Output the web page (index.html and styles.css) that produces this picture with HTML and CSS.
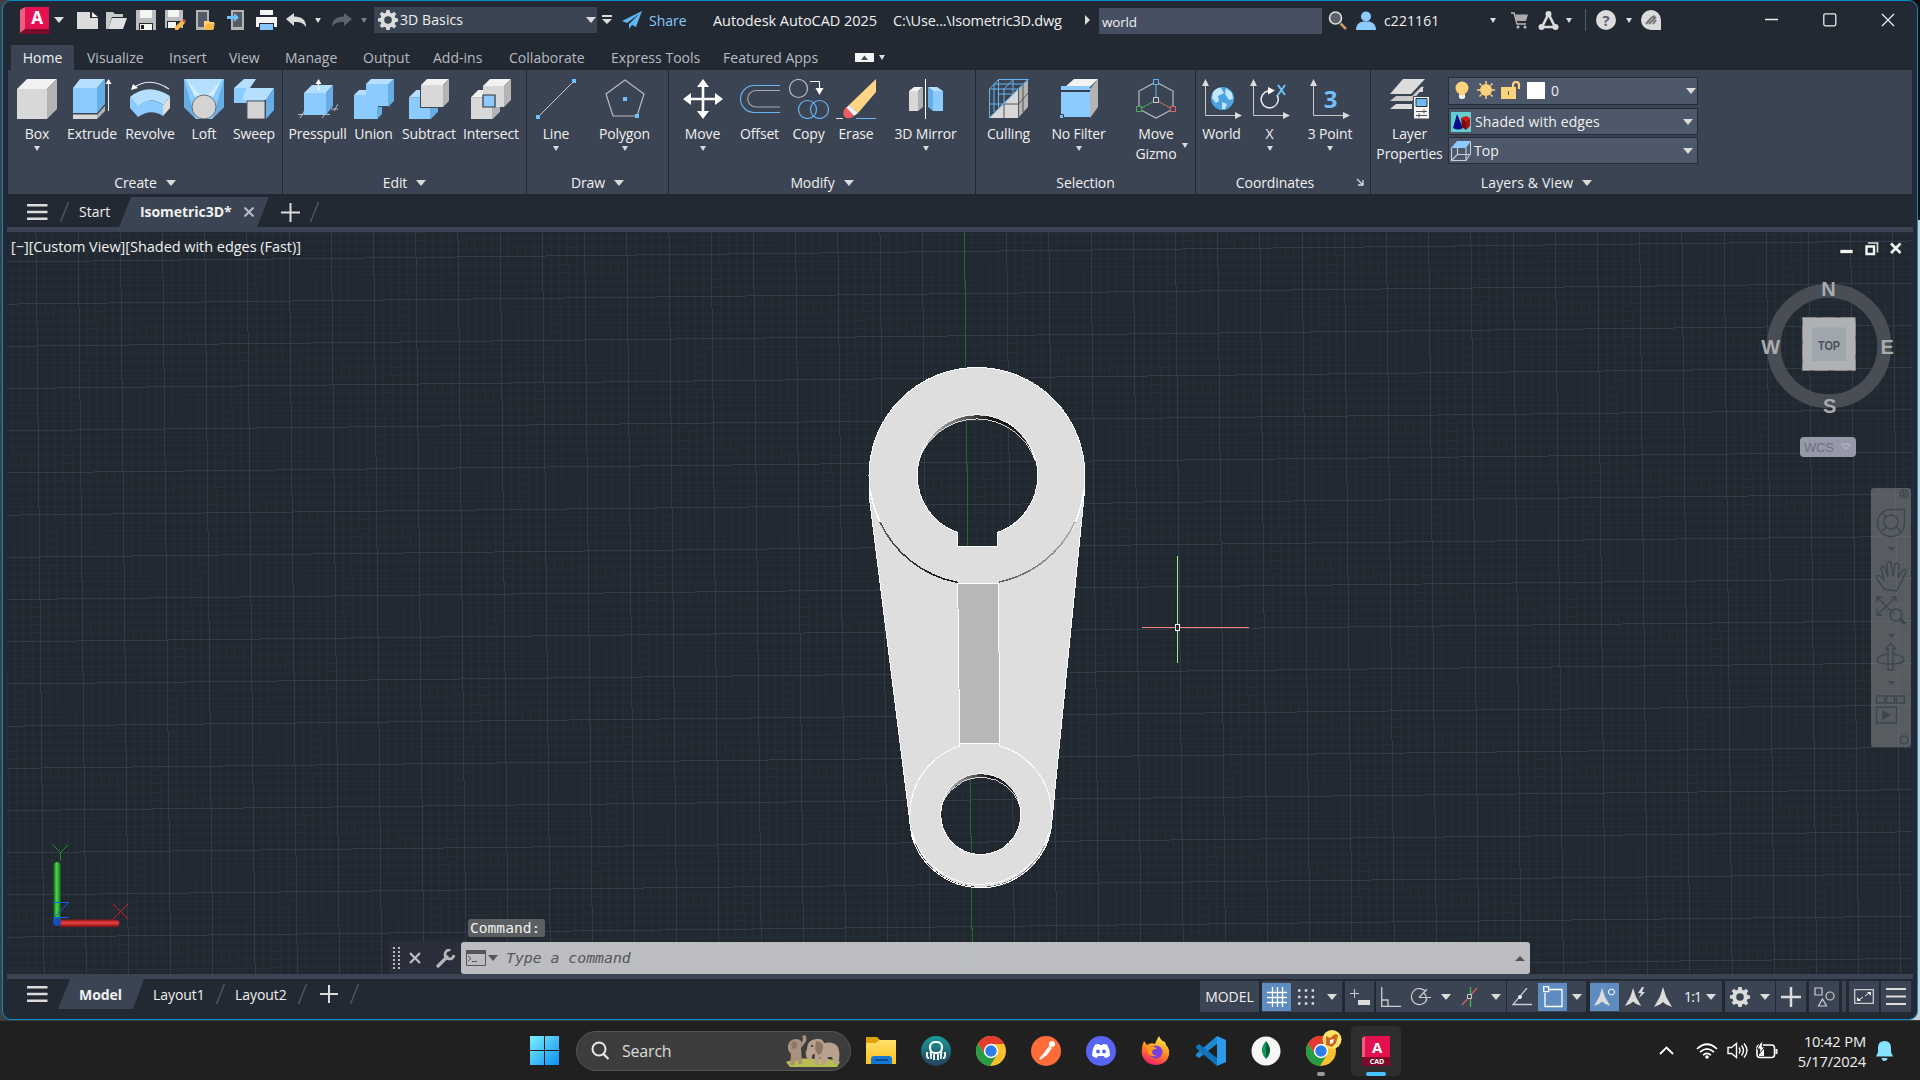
FILE: index.html
```html
<!DOCTYPE html>
<html lang="en">
<head>
<meta charset="utf-8">
<title>Autodesk AutoCAD 2025</title>
<link rel="stylesheet" href="styles.css">
</head>
<body>
<svg class="defs" width="0" height="0">
  <defs>
    <symbol id="gear" viewBox="0 0 20 20"><path fill="#dcdcdc" fill-rule="evenodd" d="M8.3 0h3.4l.4 2.6 1.8.8L16 1.800l2.300 2.300-1.600 2.200.8 1.800 2.500.3v3.400l-2.500.3-.8 1.800 1.600 2.200-2.300 2.300-2.100-1.600-1.800.8-.4 2.400H8.300l-.4-2.400-1.800-.8L4 18.100l-2.300-2.300 1.600-2.200-.8-1.800L0 11.500V8.300L2.500 8l.8-1.800L1.700 4 4 1.800l2.100 1.600 1.800-.8zM10 6.200a3.800 3.800 0 1 0 0 7.600 3.800 3.800 0 0 0 0-7.600z"/></symbol>
    <symbol id="cubeGray" viewBox="0 0 40 40"><path fill="#d8d8d8" d="M0 10h30v30H0z"/><path fill="#f2f2f2" d="M0 10 10 0h30L30 10z"/><path fill="#b4b4b4" d="M30 10 40 0v30L30 40z"/></symbol>
    <symbol id="cubeBlue" viewBox="0 0 40 40"><path fill="#8ccbff" d="M0 10h30v30H0z"/><path fill="#b5dfff" d="M0 10 10 0h30L30 10z"/><path fill="#67aee6" d="M30 10 40 0v30L30 40z"/></symbol>
    <symbol id="axes" viewBox="0 0 40 40"><path stroke="#c8c8c8" fill="none" d="M3.500 4v32.500H36"/><path fill="#dcdcdc" d="M3.500 0 7 7H0zM40 36.500 33 33v7z"/></symbol>
    <symbol id="chrome" viewBox="0 0 30 30"><circle cx="15" cy="15" r="15" fill="#fbc02d"/><path fill="#e33b2e" d="M15 15V8h13.300A15 15 0 0 0 2 7.500L8.900 18.500z"/><path fill="#279b46" d="M15 15 9 18.500 2 7.500A15 15 0 0 0 14 30l7-11.500z"/><circle cx="15" cy="15" r="7.200" fill="#fff"/><circle cx="15" cy="15" r="5.700" fill="#2f7de9"/></symbol>
    <symbol id="person" viewBox="0 0 20 20"><path fill="#dcdcdc" d="M9 0 12 9.500 18 20l-6-2.500L9 15l-3 2.500L0 20l6-10.500z"/></symbol>
    <linearGradient id="win" x1="0" y1="0" x2="1" y2="1"><stop offset="0" stop-color="#7df0ff"/><stop offset="1" stop-color="#0c8ff5"/></linearGradient>
    <linearGradient id="folder" x1="0" y1="0" x2="0" y2="1"><stop offset="0" stop-color="#ffdf6b"/><stop offset="1" stop-color="#fdc31f"/></linearGradient>
    <linearGradient id="fox" x1=".7" y1="0" x2=".3" y2="1"><stop offset="0" stop-color="#fff04a"/><stop offset=".5" stop-color="#ff8a1f"/><stop offset="1" stop-color="#f2186c"/></linearGradient>
    <linearGradient id="kraken" x1="0" y1="0" x2="0" y2="1"><stop offset="0" stop-color="#199a96"/><stop offset="1" stop-color="#24405c"/></linearGradient>
    <linearGradient id="barG" x1="0" y1="0" x2="1" y2="0"><stop offset="0" stop-color="#0d6d0d"/><stop offset=".45" stop-color="#4fd24f"/><stop offset="1" stop-color="#137a13"/></linearGradient>
    <linearGradient id="barR" x1="0" y1="0" x2="0" y2="1"><stop offset="0" stop-color="#8d1212"/><stop offset=".45" stop-color="#ea4444"/><stop offset="1" stop-color="#7c0c0c"/></linearGradient>
    <linearGradient id="bore" x1="0" y1="0" x2="1" y2="0"><stop offset="0" stop-color="#cfcfcf"/><stop offset=".3" stop-color="#777"/><stop offset=".62" stop-color="#151515"/><stop offset="1" stop-color="#222"/></linearGradient>
    <linearGradient id="rim" x1="0" y1="0" x2="1" y2="0"><stop offset="0" stop-color="#555"/><stop offset=".3" stop-color="#111"/><stop offset=".6" stop-color="#555"/><stop offset="1" stop-color="#aaa"/></linearGradient>
  </defs>
</svg>

<div class="desktop">
<div class="window">
  <header class="titlebar">
    <svg width="30" height="27" viewBox="0 0 30 27"><path fill="#ef5f7d" d="M0 3 5 0v22l-5 4z"/><path fill="#e51050" d="M5 0h24v22H5z"/><path fill="#7e0a2c" d="M5 22h24l1 5H0z"/><text x="17" y="17" text-anchor="middle" class="logo-a">A</text></svg>
    <i class="caret"></i>
    <svg width="21" height="17" viewBox="0 0 21 17"><path fill="#dcdcdc" d="M0 0h13v6h8v11H0z"/><path fill="#f4f4f4" d="M15 0l6 5h-6z"/></svg>
    <svg width="21" height="17" viewBox="0 0 21 17"><path fill="#c9c9c9" d="M0 0h7l2 2h8v3H6L2 17H0z"/><path fill="#e0e0e0" d="M6 6h15l-4 11H2z"/></svg>
    <svg width="21" height="20" viewBox="0 0 21 20"><path fill="#bdbdbd" d="M0 0h20v20H0z"/><path fill="#f4f4f4" d="M4 0h12v8H4z"/><path fill="#222933" d="M3 13h14v7H3z"/><path fill="#f4f4f4" d="M4 14h12v6H4z"/><path fill="#222" d="M5 15h3v4H5z"/></svg>
    <svg width="21" height="20" viewBox="0 0 21 20"><path fill="#bdbdbd" d="M0 0h18v18H0z"/><path fill="#f4f4f4" d="M3 0h11v7H3z"/><path fill="#222933" d="M2 11h14v7H2z"/><path fill="#f4f4f4" d="M3 12h8v6H3z"/><path fill="#ffb44c" d="m10 17 7-7 3 3-7 7h-3z"/><path fill="#e5484d" d="m17 10 2-1 2 2-1 2z"/></svg>
    <svg width="20" height="20" viewBox="0 0 20 20"><path fill="#b5b5b5" d="M0 0h13v20H0z"/><path fill="#555a63" d="M2 2h9v15H2z"/><path fill="#ffd27a" d="M8 11h5l1 1h4v7H8z"/><path fill="#f9b64a" d="m10 14 9-1-2 7H8z"/></svg>
    <svg width="20" height="20" viewBox="0 0 20 20"><path fill="#b5b5b5" d="M4 0h13v20H4z"/><path fill="#555a63" d="M6 2h9v15H6z"/><path fill="#6fc0ff" d="M0 6h7V3l5 4.500L7 12V9H0z"/></svg>
    <svg width="21" height="20" viewBox="0 0 21 20"><path fill="#f4f4f4" d="M4 0h13v5H4zM0 7h21v10h-3v-4H3v4H0z"/><path fill="#85c6ff" d="M4 14h13v6H4z"/></svg>
    <svg width="21" height="14" viewBox="0 0 21 14"><path fill="#dcdcdc" d="M8 0v3.500C16 3.500 20 7 20 14 17 9.500 14 8.800 8 9v4L0 6z"/></svg>
    <i class="caret small"></i>
    <svg width="21" height="14" viewBox="0 0 21 14"><path fill="#5d636d" d="M12 0v3.500C4 3.500 0 7 0 14 3 9.500 6 8.800 12 9v4l8-7z"/></svg>
    <i class="caret small dim"></i>
    <div class="workspace"><svg width="20" height="20"><use href="#gear"/></svg><span>3D Basics</span><i class="caret"></i></div>
    <svg width="12" height="10" viewBox="0 0 12 10"><path fill="#dcdcdc" d="M1 0h10v2H1zM1 4h10L6 9z"/></svg>
    <svg width="20" height="18" viewBox="0 0 20 18"><path fill="#5fb4f2" d="M20 0 0 10l5 2L17 3 7 13v5l3-4 4 2z"/></svg>
    <span class="share">Share</span>
    <span class="product">Autodesk AutoCAD 2025</span>
    <span class="path">C:\Use...\Isometric3D.dwg</span>
    <svg width="6" height="10" viewBox="0 0 6 10"><path fill="#dcdcdc" d="M1 0 6 5 1 10z"/></svg>
    <div class="find">world</div>
    <svg width="19" height="19" viewBox="0 0 19 19"><circle cx="7.500" cy="7" r="6" fill="#59616d" stroke="#e0e0e0" stroke-width="1.600"/><path stroke="#c99a62" stroke-width="2.500" d="m12.500 12.500 5.500 5.500"/></svg>
    <svg width="20" height="19" viewBox="0 0 20 19"><circle cx="10" cy="5.500" r="5" fill="#8ccbff"/><path fill="#8ccbff" d="M0 19c0-6 4-8 7-8.500h6c3 .5 7 2.500 7 8.500z"/></svg>
    <span class="account">c221161</span>
    <i class="caret small"></i>
    <svg width="17" height="17" viewBox="0 0 17 17"><path fill="none" stroke="#bbb" stroke-width="1.300" d="M0 1h3l3 11h9"/><path fill="#aaa" d="M4 2.500h13L15 9H5.500z"/><circle cx="7" cy="15" r="1.500" fill="#bbb"/><circle cx="14" cy="15" r="1.500" fill="#bbb"/></svg>
    <svg width="21" height="19" viewBox="0 0 21 19"><path fill="none" stroke="#dcdcdc" stroke-width="2.600" d="M10.500 3 4 16h13z"/><circle cx="10.500" cy="3" r="3" fill="#dcdcdc"/><circle cx="3.500" cy="16" r="3" fill="#dcdcdc"/><circle cx="17.500" cy="16" r="3" fill="#dcdcdc"/></svg>
    <i class="caret small"></i>
    <i class="sep"></i>
    <svg width="20" height="20" viewBox="0 0 20 20"><circle cx="10" cy="10" r="10" fill="#dcdcdc"/><text x="10" y="15.500" text-anchor="middle" class="help-q">?</text></svg>
    <i class="caret small"></i>
    <svg width="20" height="20" viewBox="0 0 20 20"><path fill="#dcdcdc" d="M10 0a10 10 0 0 1 10 10v10H10a10 10 0 0 1 0-20z"/><path stroke="#777" stroke-width="2" fill="none" d="m5 14 5-6 4-2M8 14l4-4 3-3M12 14l3-4"/></svg>
    <svg width="14" height="14" viewBox="0 0 14 14"><path stroke="#eee" stroke-width="1.300" d="M0 6.500h13"/></svg>
    <svg width="14" height="14" viewBox="0 0 14 14"><rect x=".8" y=".8" width="12" height="12" rx="1.500" fill="none" stroke="#eee" stroke-width="1.300"/></svg>
    <svg width="14" height="14" viewBox="0 0 14 14"><path stroke="#eee" stroke-width="1.300" d="m1 1 12 12M13 1 1 13"/></svg>
  </header>

  <nav class="tabs">
    <span class="tab active">Home</span><span>Visualize</span><span>Insert</span><span>View</span><span>Manage</span><span>Output</span><span>Add-ins</span><span>Collaborate</span><span>Express Tools</span><span>Featured Apps</span>
    <svg width="19" height="9" viewBox="0 0 19 9"><path fill="#f4f4f4" d="M0 0h19v9H0z"/><path fill="#4a505a" d="M9.500 2.500 13 7H6z"/></svg>
    <i class="caret small"></i>
  </nav>

  <section class="ribbon">
    <div class="panel create">
      <div class="tools">
        <button class="tool"><svg><use href="#cubeGray"/></svg><span>Box</span><i class="caret small"></i></button>
        <button class="tool"><svg viewBox="0 0 40 40"><path fill="#8ccbff" d="M1 9h24v25H1z"/><path fill="#b5dfff" d="M1 9 8 0h25l-8 9z"/><path fill="#67aee6" d="m25 9 8-9v25l-8 9z"/><path fill="#d8d8d8" d="M1 35.500h24V40H1z"/><path fill="#b4b4b4" d="m25 36 8-9v5l-8 8z"/><path stroke="#eee" d="M36.500 3v29"/><path fill="#fff" d="m36.500 0 3 5h-6z"/></svg><span>Extrude</span></button>
        <button class="tool"><svg viewBox="0 0 40 40"><path fill="none" stroke="#e8e8e8" stroke-width="1.200" d="M3 9Q20-3 39 10"/><path fill="#fff" d="m1 11 2-6 5 4z"/><path fill="#b5dfff" d="M0 18Q18 3 40 17l-7 9Q20 16 8 28z"/><path fill="#8ccbff" d="m0 18 8 9v11L0 29zM8 27q12-10 25-1v11q-12-8-25 1z"/><path fill="#ddd" d="m33 26 7-9v12l-7 8z"/></svg><span>Revolve</span></button>
        <button class="tool"><svg viewBox="0 0 40 40"><path fill="#8ccbff" d="M0 0h40v28L28 40H12L0 28z"/><path fill="#67aee6" d="M0 0v28l11 10zM40 0v28L29 38z"/><path fill="#b5dfff" d="M2 0h36L26 18H14z"/><path fill="#d3eeff" d="m2 0 9 18 5-2zM38 0l-9 18-5-2z"/><circle cx="20" cy="28" r="12" fill="#d4d4d4" stroke="#555" stroke-width=".8"/></svg><span>Loft</span></button>
        <button class="tool"><svg viewBox="0 0 40 40"><path fill="#8ccbff" d="M0 9h12l-2 12h20v14H13V24H0z"/><path fill="#b5dfff" d="M0 9 10 0h12l-6 9h24l-8 12H8l4-12z"/><path fill="#67aee6" d="m32 21 8-12v22l-8 9z"/><path fill="#d4d4d4" stroke="#555" d="M13 22h18v18H13z"/></svg><span>Sweep</span></button>
      </div>
      <div class="caption">Create<i class="caret"></i></div>
    </div>
    <div class="panel edit">
      <div class="tools">
        <button class="tool"><svg viewBox="0 0 40 40"><path stroke="#bbb" d="M0 35.500h32M2 39l5-8M24 39l5-7M33 30h7M36 32l4-7"/><path fill="#8ccbff" d="M6 14h22v22H6z"/><path fill="#b5dfff" d="m6 14 8-8h21l-7 8z"/><path fill="#67aee6" d="m28 14 7-8v21l-7 9z"/><path stroke="#fff" stroke-width="1.400" d="M20.500 3v8"/><path fill="#fff" d="m20.500 0 3 5h-6z"/></svg><span>Presspull</span></button>
        <button class="tool"><svg viewBox="0 0 40 40"><path fill="#8ccbff" d="M0 16h12V5h22v22H24v13H0z"/><path fill="#b5dfff" d="m0 16 5-5h7v5zM12 5l5-5h23l-5 5z"/><path fill="#67aee6" d="m34 5 6-5v22l-6 6h-6v7l-5 5V28h11z"/></svg><span>Union</span></button>
        <button class="tool"><svg viewBox="0 0 40 40"><svg x="0" y="11" width="29" height="29"><use href="#cubeBlue"/></svg><path fill="#3b4453" d="M11 5h23v24H11z"/><path fill="#d8d8d8" d="M12 6h22v22H12z"/><path fill="#f2f2f2" d="m12 6 6-6h22l-6 6z"/><path fill="#b4b4b4" d="m34 6 6-6v22l-6 6z"/></svg><span>Subtract</span></button>
        <button class="tool"><svg viewBox="0 0 40 40"><svg x="0" y="11" width="29" height="29"><use href="#cubeGray"/></svg><svg x="12" y="0" width="28" height="28"><use href="#cubeGray"/></svg><path fill="#8ccbff" stroke="#333" stroke-width="1.200" d="M12 16h12v12H12z"/></svg><span>Intersect</span></button>
      </div>
      <div class="caption">Edit<i class="caret"></i></div>
    </div>
    <div class="panel draw">
      <div class="tools">
        <button class="tool"><svg viewBox="0 0 40 40"><path stroke="#c8c8c8" d="M2 38 38 2"/><path fill="#6fc0ff" d="M0 36h4v4H0zM36 0h4v4h-4z"/></svg><span>Line</span><i class="caret small"></i></button>
        <button class="tool"><svg viewBox="0 0 40 40"><path fill="none" stroke="#bbb" stroke-width="1.200" d="M20 1 39 15l-7 22H8L1 15z"/><path fill="#6fc0ff" d="M18 18h4v4h-4zM30 35h4v4h-4z"/></svg><span>Polygon</span><i class="caret small"></i></button>
      </div>
      <div class="caption">Draw<i class="caret"></i></div>
    </div>
    <div class="panel modify">
      <div class="tools">
        <button class="tool"><svg viewBox="0 0 40 40"><path stroke="#fff" stroke-width="2.600" d="M20 5v30M5 20h30"/><path fill="#fff" d="m20 0 6 8H14zM20 40l6-8H14zM0 20l8-6v12zM40 20l-8-6v12z"/></svg><span>Move</span><i class="caret small"></i></button>
        <button class="tool"><svg viewBox="0 0 40 40"><path fill="none" stroke="#68b4f0" stroke-width="1.200" d="M40 6.500H14a13.500 13.500 0 0 0 0 27h26"/><path fill="none" stroke="#aaa" stroke-width="1.200" d="M40 11.500H16a8 8 0 0 0 0 16.500h24"/></svg><span>Offset</span></button>
        <button class="tool"><svg viewBox="0 0 40 40"><g fill="none" stroke-width="1.200"><circle cx="9.500" cy="9.500" r="9" stroke="#bbb"/><circle cx="18.500" cy="30.500" r="9" stroke="#68b4f0"/><circle cx="30.500" cy="30.500" r="9" stroke="#68b4f0"/></g><path fill="none" stroke="#fff" d="M21 2.500h9.500V10"/><path fill="#fff" d="M26.500 9h8l-4 7z"/></svg><span>Copy</span></button>
        <button class="tool"><svg viewBox="0 0 40 40"><path fill="#ffd685" d="M40 0v13L22 34l-9-8z"/><path fill="#f4f4f4" d="m13 26 9 8-4 3-8-8z"/><path fill="#f05c61" d="m10 28 8 9q-3 3-8 2-4-3-2-8z"/><path stroke="#ddd" d="M0 39.500h7"/><path stroke="#68b4f0" d="M20 39.500h20"/></svg><span>Erase</span></button>
        <button class="tool"><svg viewBox="0 0 40 40"><path fill="#d8d8d8" d="M3 12h9v20H3z"/><path fill="#f2f2f2" d="m3 12 5-4h9l-5 4z"/><path fill="#b0b0b0" d="m12 12 5-4v20l-5 4z"/><path fill="#67aee6" d="m22 8 5 4v20l-5-4z"/><path fill="#b5dfff" d="M22 8h9l6 4H27z"/><path fill="#8ccbff" d="M27 12h10v20H27z"/><path stroke="#fff" d="M19.500 0v40"/></svg><span>3D Mirror</span><i class="caret small"></i></button>
      </div>
      <div class="caption">Modify<i class="caret"></i></div>
    </div>
    <div class="panel selection">
      <div class="tools">
        <button class="tool"><svg viewBox="0 0 40 40"><path fill="#d8d8d8" d="M0 39 29 10v29z"/><path fill="#b4b4b4" d="M29 10 39 0v28L29 39z"/><path fill="none" stroke="#68b4f0" d="M.5 39V10h29M.5 10l9-9.500h30L29.500 10 .5 39M.5 25h15M15 10v14M15 10l9-9.500M5 5h30M9.500.5v28M24 .5V14M5 5v28M10 15h14"/><path fill="none" stroke="#555" d="M15 25h14.500L39 14M15 25v14M29.500 10v29M34 5v28"/></svg><span>Culling</span></button>
        <button class="tool"><svg viewBox="0 0 40 40"><path fill="#b4b4b4" d="m31 10 8-10v28l-8 11z"/><path fill="#f2f2f2" d="m6 8 9-8h24l-8 8z"/><path fill="#8ccbff" d="M2 7h29v4H2zM2 13h29v25H2z"/><path fill="#333b48" d="M2 11h29v1.500H2z"/><path fill="#6fc0ff" stroke="#3b4453" d="M.5 35.500h4v4h-4z"/></svg><span>No Filter</span><i class="caret small"></i></button>
        <button class="tool"><svg viewBox="0 0 40 40"><path fill="none" stroke="#bbb" stroke-width="1.200" d="M20 3l17 9v18l-17 9L3 30V12z"/><path stroke="#68b4f0" d="M20 3v17"/><path stroke="#4fae5f" d="M20 21 4 30"/><path stroke="#e26868" d="m20 21 16 9"/><g fill="#3b4453"><path stroke="#68b4f0" d="M17.500.5h5v5h-5z"/><path stroke="#ccc" d="M17.500 18.500h5v5h-5z"/><path stroke="#4fae5f" d="M.5 27.500h5v5h-5z"/><path stroke="#e26868" d="M34.500 27.500h5v5h-5z"/></g></svg><span>Move<br>Gizmo</span><i class="caret small side"></i></button>
      </div>
      <div class="caption">Selection</div>
    </div>
    <div class="panel coordinates">
      <div class="tools">
        <button class="tool"><svg viewBox="0 0 40 40"><use href="#axes"/><circle cx="20.500" cy="19.500" r="11.500" fill="#4da3e0"/><path fill="#c2e6ff" d="M11 13q5-5 8-4l3 5-6 3 1 5-3 2-4-5zM24 9l6 5 1 6-4 1-4-6zM20 23l5 2-2 5h-3z"/></svg><span>World</span></button>
        <button class="tool"><svg viewBox="0 0 40 40"><use href="#axes"/><path fill="none" stroke="#eee" stroke-width="1.500" d="M18 12a8.500 8.500 0 1 0 9 4"/><path fill="#fff" d="m18 8 7 3.500-7 4z"/><path stroke="#6fc0ff" stroke-width="2" d="m28 6 7 10M35 6l-7 10"/></svg><span>X</span><i class="caret small"></i></button>
        <button class="tool"><svg viewBox="0 0 40 40"><use href="#axes"/><text x="20.500" y="29" text-anchor="middle" class="three">3</text></svg><span>3 Point</span><i class="caret small"></i></button>
      </div>
      <div class="caption">Coordinates<svg class="launcher" width="8" height="8" viewBox="0 0 8 8"><path fill="none" stroke="#ddd" stroke-width="1.300" d="m1 1 5 5M7 2v5H2"/></svg></div>
    </div>
    <div class="panel layers">
      <div class="tools">
        <button class="tool"><svg viewBox="0 0 40 40"><path fill="#dcdcdc" d="M13 0h22L21 15H0z"/><path fill="#c9c9c9" d="M6 17h16l9-9h3L22 22H0z"/><path fill="#dcdcdc" d="M6 25h16v5H0zM27 13l6-6v6z"/><path fill="#f4f4f4" stroke="#3b4453" d="M23.500 17.500h16V40h-16z"/><path fill="#6fbaf5" stroke="#333" d="M26 19.500h11v8H26z"/><path stroke="#555" d="M26 32.500h11M26 36.500h11M34 30.500v4M29 34.500v4"/></svg><span>Layer<br>Properties</span></button>
        <div class="combos">
          <div class="combo tall"><svg width="94" height="20" viewBox="0 0 94 20"><circle cx="7" cy="7" r="6.500" fill="#ffd37c"/><path fill="#ffd37c" d="M4 11h6v3H4z"/><path fill="#f4f4f4" d="M4 14h6v3l-2 1H6l-2-1z"/><circle cx="31" cy="9" r="6" fill="#ffd37c"/><path stroke="#ffd37c" stroke-width="1.500" d="M31 0v3M31 15v3M22 9h3M37 9h3M24.500 2.500l2 2M35.500 13.500l2 2M37.500 2.500l-2 2M26.500 13.500l-2 2"/><path fill="#ffd37c" d="M46 6h15v12H46z"/><path fill="none" stroke="#ffd37c" stroke-width="2.200" d="M58 7V4q0-3 3-3t3 3v4"/><path stroke="#555" d="M53.500 10v4"/><path fill="#fff" d="M72 1h18v17H72z"/></svg><span>0</span><i class="caret"></i></div>
          <div class="combo"><svg width="20" height="20" viewBox="0 0 20 20"><path fill="#63cfcf" d="M0 0h20v20H0z"/><path fill="#0b0b8c" d="m6 2 6 14q-5 3-10 0z"/><path fill="#e01010" d="m10 6 5-2 4 2-4 3z"/><path fill="#7a0c0c" d="m10 6 5 3v9l-4-3z"/><path fill="#a81010" d="m15 9 4-3v8l-4 4z"/></svg><span>Shaded with edges</span><i class="caret"></i></div>
          <div class="combo view"><svg width="20" height="20" viewBox="0 0 20 20"><path fill="#8ccbff" d="m0 7 6-7h14l-5 7z"/><path fill="none" stroke="#c9d2dc" stroke-width="1.100" d="M.5 7v12.500H15V7M15 19.500l4.500-7V1M6.500 7v6.500L.5 19.500M6.500 13.500h13"/></svg><span>Top</span><i class="caret"></i></div>
        </div>
      </div>
      <div class="caption">Layers &amp; View<i class="caret"></i></div>
    </div>
  </section>

  <nav class="docs">
    <svg width="21" height="16" viewBox="0 0 21 16"><path fill="#dcdcdc" d="M0 0h20.500v2.500H0zM0 6.700h20.500v2.500H0zM0 13.500h20.500V16H0z"/></svg>
    <svg width="9" height="20"><path stroke="#525a68" stroke-width="1.300" d="M8.500 0 .5 20"/></svg>
    <span>Start</span>
    <div class="doc-tab"><b>Isometric3D*</b><svg width="10" height="10" viewBox="0 0 10 10"><path stroke="#b9bdc4" stroke-width="2" d="m.5.5 9 9M9.500.5l-9 9"/></svg></div>
    <svg width="19" height="19"><path stroke="#dcdcdc" stroke-width="2" d="M9.500 0v19M0 9.500h19"/></svg>
    <svg width="9" height="20"><path stroke="#525a68" stroke-width="1.300" d="M8.500 0 .5 20"/></svg>
  </nav>

  <main class="viewport">
    <svg class="scene" width="1906" height="742" viewBox="7 232 1906 742">
      <g shape-rendering="crispEdges" fill="none">
        <path id="minor" stroke="#262e3a"/>
        <path id="major" stroke="#323a4b"/>
        <path stroke="#1e6b24" d="M964.500 232 972.500 974"/>
      </g>
      <g shape-rendering="crispEdges">
        <path fill="#dedede" stroke="#fff" fill-rule="evenodd" d="M869 475.500A108 108 0 0 1 1085 475.500C1085 487 1084 497 1083 507L1052 820A71.300 71.300 0 0 1 909.600 820L870.500 507C869 497 869 487 869 475.500ZM957.700 532.500V546.300H997.300V532.500A60.300 60.300 0 1 0 957.700 532.500ZM940.700 814.500a40 40 0 1 0 80 0a40 40 0 1 0-80 0z"/>
        <path fill="none" stroke="#fff" stroke-width="1.500" d="M870 490Q874 512 884 529M1084 490Q1081 512 1072 529"/>
        <path fill="none" stroke="url(#rim)" stroke-width="1.500" d="M880 522A108 108 0 0 0 957.700 582.500M999 582A108 108 0 0 0 1075 522"/>
        <path fill="url(#bore)" stroke="#fff" stroke-width=".8" d="M919 460A59.800 59.800 0 0 1 1035 460A61.500 61.500 0 0 0 919 460Z"/>
        <path fill="url(#bore)" stroke="#fff" stroke-width=".8" d="M941.500 806A40 40 0 0 1 1020 806A41.300 41.300 0 0 0 941.500 806Z"/>
        <path fill="none" stroke="#fff" d="M960 746A71 71 0 0 0 910 815M1000 746A71 71 0 0 1 1051.500 815M912 832A71 71 0 0 0 1049 832"/>
        <path fill="none" stroke="url(#rim)" stroke-width="1.500" d="M915 844A70.500 70.500 0 0 0 1045 845"/>
        <path fill="none" stroke="#fff" d="M911 833A71.500 71.500 0 0 0 1050 833"/>
        <path fill="#b7b7b7" stroke="#fff" d="M957.700 583.500H998.500L999.700 743.500H959.700Z"/>
        <path stroke="#fff" d="M959.700 743v3M999.700 743v3"/>
        <path stroke="#f98080" d="M1142 627.500h33M1180 627.500h69"/>
        <path stroke="#8cf884" d="M1177.500 556v68M1177.500 631v32"/>
        <path fill="none" stroke="#fff" d="M1175.500 624.500h4v6h-4z"/>
      </g>
      <g>
        <path fill="url(#barG)" d="M53.500 864q3.500-4 7 0v56h-7z"/>
        <path fill="url(#barR)" d="M60 919.500h58q2 3.500 0 7.500H60z"/>
        <circle cx="57" cy="922" r="4" fill="#1450b8"/>
        <path fill="none" stroke="#12a012" d="m53 845 7.500 7.500L68 845M60.500 852v8"/>
        <path fill="none" stroke="#d42020" d="m113 904 15 15M128 904l-15 15"/>
        <path fill="none" stroke="#1060ff" d="M53.500 902.500H68.500L54 917.500H68"/>
      </g>
      <g>
        <circle cx="1829" cy="346" r="55.300" fill="none" stroke="#484d56" stroke-width="14"/>
        <path fill="#b0b1b3" stroke="#85888c" stroke-dasharray="14 5" d="M1802.500 317.500h53v53h-53z"/>
        <path fill="#9fa7ad" d="M1812 327.500h34V361h-34z"/>
        <text x="1829" y="349.500" textLength="22" lengthAdjust="spacingAndGlyphs" class="cube">TOP</text>
        <g class="compass"><text x="1828.300" y="295.500">N</text><text x="1770.700" y="354">W</text><text x="1887" y="353.500">E</text><text x="1829.500" y="412.500">S</text></g>
        <rect x="1800" y="437" width="56" height="20" rx="4" fill="#9699a7"/>
        <text x="1804" y="451.500" textLength="30" class="wcs">WCS</text>
        <path fill="none" stroke="#b9bdc8" d="M1841.500 444h9l-4.500 5z"/>
        <path fill="#f4f4f4" stroke="#111" stroke-width=".6" d="M1840 249.500h13v4h-13z"/>
        <path fill="none" stroke="#ddd" stroke-width="1.600" d="M1868 243h9.500v9.500"/>
        <path fill="none" stroke="#f4f4f4" stroke-width="2.400" d="M1866.500 246.500h7.500v7.500h-7.500z"/>
        <path stroke="#f4f4f4" stroke-width="2.600" d="m1891 243.500 9.500 9.500M1900.500 243.500 1891 253"/>
      </g>
      <g fill="none" stroke="#3f4550" stroke-width="1.400">
        <rect x="1871" y="488" width="40" height="259" rx="3" fill="#7b7f81" fill-opacity=".6" stroke="none"/>
        <circle cx="1904" cy="494" r="4"/><path d="m1902 492 4 4M1906 492l-4 4"/>
        <path d="M1904.500 509.500V523A13.500 13.500 0 1 1 1891 509.500z"/><circle cx="1891" cy="522" r="7"/><path d="m1882 513 4 4M1896 527l4 4M1886 527l-4 4"/>
        <path d="M1884 589l-7-10q-2-5 3-3l4 4-3-12q2-4 4 0l3 9-1-14q3-3 4 0l2 13 2-12q3-2 4 1l-1 13 5-8q4-1 3 2l-5 11-5 8z"/>
        <path d="m1878 598 16 16M1896 597l-18 17M1877 602v-5h5M1891 597h5v5M1877 609v6h5"/><circle cx="1896" cy="615" r="6"/><path stroke-width="3" d="m1900 619 5 5"/>
        <path d="M1890.500 643l5 6h-2.500v21h-5v-21h-2.500zM1887 654q-10 2-10 6t13 4 14-4-11-6"/>
        <path d="M1876.500 696h8v7h-8zM1886.500 696h8v7h-8zM1896.500 696h8v7h-8zM1876.500 707h20v16h-20z"/>
        <circle cx="1904" cy="740" r="4"/>
        <g fill="#3f4550" stroke="none"><path d="M1888 547h7l-3.500 3.500zM1888 634h7l-3.500 3.500zM1888 681h7l-3.500 3.500zM1882 710l9 5-9 5z"/></g>
      </g>
    </svg>
    <div class="view-label">[−][Custom View][Shaded with edges (Fast)]</div>
    <div class="history">Command:</div>
    <div class="command">
      <div class="handle">
        <svg width="7" height="22"><path stroke="#bbb" stroke-width="2" stroke-dasharray="2 2" d="M1 0v22M6 0v22"/></svg>
        <svg width="12" height="12"><path stroke="#bfc1c5" stroke-width="2.200" d="m1 1 10 10M11 1 1 11"/></svg>
        <svg width="19" height="19" viewBox="0 0 19 19"><path stroke="#b5b7bb" stroke-width="3.200" stroke-linecap="round" d="m2 17 9-9"/><path fill="none" stroke="#b5b7bb" stroke-width="2.800" d="M14.500 1A4.500 4.500 0 1 0 18 6"/></svg>
      </div>
      <div class="entry">
        <svg width="20" height="16" viewBox="0 0 20 16"><path fill="none" stroke="#555" d="M.5.5h19v15H.5z"/><path fill="#555" d="M0 0h20v4H0z"/><path fill="none" stroke="#555" d="m2 6 3 2.500L2 11M6 11.500h5"/></svg>
        <i class="caret dark"></i><span>Type a command</span><i class="caret dark up"></i>
      </div>
    </div>
  </main>

  <footer class="bottom">
    <div class="layouts">
      <svg width="21" height="16" viewBox="0 0 21 16"><path fill="#dcdcdc" d="M0 0h20.500v2.500H0zM0 6.700h20.500v2.500H0zM0 13.500h20.500V16H0z"/></svg>
      <div class="layout-tab"><b>Model</b></div>
      <span>Layout1</span>
      <svg width="9" height="20"><path stroke="#525a68" stroke-width="1.300" d="M8.500 0 .5 20"/></svg>
      <span>Layout2</span>
      <svg width="9" height="20"><path stroke="#525a68" stroke-width="1.300" d="M8.500 0 .5 20"/></svg>
      <svg width="18" height="18"><path stroke="#dcdcdc" stroke-width="2" d="M9 0v18M0 9h18"/></svg>
      <svg width="9" height="20"><path stroke="#525a68" stroke-width="1.300" d="M8.500 0 .5 20"/></svg>
    </div>
    <div class="status">
      <div class="cell c-model">MODEL</div>
      <div class="cell c-grid"><span class="on"><svg width="20" height="20"><path stroke="#fff" stroke-width="1.300" d="M5.500 0v20M10.500 0v20M15.500 0v20M0 5.500h20M0 10.500h20M0 15.500h20"/></svg></span><svg width="17" height="16"><path stroke="#dcdcdc" stroke-width="2.500" stroke-dasharray="2.500 4.300" d="M0 1.500h17M0 8h17M0 14.500h17"/></svg><i class="caret"></i></div>
      <div class="cell c-dyn"><svg width="20" height="18" viewBox="0 0 20 18"><path stroke="#ccc" d="M0 5.500h9M4.500 1v9"/><path fill="#dcdcdc" d="M8 12h12v5H8z"/></svg></div>
      <div class="cell c-ortho"><svg width="20" height="20"><path fill="none" stroke="#ccc" stroke-width="1.300" d="M.7 0v19.300H20M.7 13H7v6"/></svg><svg width="22" height="18"><path fill="none" stroke="#ccc" stroke-width="1.200" d="M16 4a8 8 0 1 0 1 7M9 9.500h12M9 9.500 17 1M14 5q3 3 2 7"/></svg><i class="caret"></i><svg width="17" height="20"><path stroke="#d65c5c" stroke-width="1.300" d="M16 1 1 18"/><path stroke="#49ad5c" stroke-width="1.300" d="M9.500 0v20"/><path fill="#3b4453" stroke="#ccc" d="M6.500 7.500h4v4h-4z"/></svg><i class="caret"></i></div>
      <div class="cell c-track"><svg width="20" height="18"><path fill="none" stroke="#ccc" stroke-width="1.300" d="M15 0 1 16.500h19"/><circle cx="8" cy="9" r="2" fill="#eee"/></svg><span class="on"><svg width="20" height="22"><path fill="none" stroke="#fff" stroke-width="1.300" d="M6 3.500h13v17H2V7M.7.7h5v5h-5z"/></svg></span><i class="caret"></i></div>
      <div class="cell c-anno"><span class="on"><svg width="22" height="20" viewBox="0 0 22 20"><svg width="18" height="20"><use href="#person"/></svg><circle cx="17.500" cy="5" r="3" fill="none" stroke="#fff"/></svg></span><svg width="20" height="20" viewBox="0 0 20 20"><svg width="18" height="20"><use href="#person"/></svg><path fill="#dcdcdc" d="m17 0-4 6h3l-2 5 6-6h-3l2-5z"/></svg><svg width="20" height="20"><use href="#person"/></svg><em>1:1</em><i class="caret"></i></div>
      <div class="cell c-gear"><svg width="20" height="20"><use href="#gear"/></svg><i class="caret"></i></div>
      <div class="cell c-plus"><svg width="20" height="20"><path stroke="#dcdcdc" stroke-width="2.500" d="M10 0v20M0 10h20"/></svg></div>
      <div class="cell c-iso"><svg width="21" height="20"><path fill="none" stroke="#ccc" stroke-width="1.200" d="M1 1h7v7H1zM4.500 19h8L8.500 12z"/><circle cx="16" cy="9" r="4" fill="none" stroke="#ccc" stroke-width="1.200"/></svg></div>
      <div class="cell c-bar"></div>
      <div class="cell c-full"><svg width="20" height="15"><path fill="none" stroke="#ccc" stroke-width="1.300" d="M.7.7h18.600v13.600H.7z"/><path fill="#eee" d="M13 3h4v4zM3 8v4h4z"/><path stroke="#eee" d="m11 7 4-3M5 11l4-3"/></svg></div>
      <div class="cell c-menu"><svg width="20" height="18"><path fill="#dcdcdc" d="M0 0h20v2H0zM0 7.500h20v2H0zM0 15h20v2H0z"/></svg></div>
    </div>
  </footer>
</div>
</div>

<div class="taskbar">
  <svg width="29" height="29" viewBox="0 0 29 29"><path fill="url(#win)" d="M0 0h14v14H0zM15 0h14v14H15zM0 15h14v14H0zM15 15h14v14H15z"/></svg>
  <div class="search"><svg width="18" height="19"><circle cx="8" cy="8" r="6.500" fill="none" stroke="#e8e8e8" stroke-width="2"/><path stroke="#e8e8e8" stroke-width="2.200" d="m12.500 13 5 5"/></svg><span>Search</span>
    <svg width="56" height="32" viewBox="0 0 56 32"><path fill="#b9bf4e" d="M1 27q12-5 27-3 15-2 27 3l-3 5H5z"/><path fill="#a8917d" d="M3 10q2-6 8-6 5 0 6 4l1-5-1-2 3-1q3 4 0 8l-4 5 1 16h-4l-1-6-3 7H5L6 19q-4-4-3-9z"/><path fill="#b8a28f" d="M22 14q0-9 9-10 6-1 8 4 10-2 14 4 3 8 0 17h-4l-2-7h-4l-2 8h-4l-2-9-2 9h-4l1-11q-4 0-3 5l-4 1q-4-6-1-11z"/><path fill="#8c7666" d="M31 6q8 0 7 7-1 6-5 7l-3-6zM8 6q5 1 4 5-1 3-4 3l-2-4z"/><circle cx="27" cy="11" r="1" fill="#222"/></svg>
  </div>
  <svg width="30" height="28" viewBox="0 0 30 28"><path fill="#e0a20c" d="M0 0h11l3 3v5H0z"/><path fill="url(#folder)" d="M0 6h10l3-3h17v24H0z"/><path fill="#1478d4" d="M5 27v-5q0-3 3-3h15q3 0 3 3v5z"/><path stroke="#0a3f80" stroke-width="1.500" d="M9 23h13"/></svg>
  <svg width="30" height="30" viewBox="0 0 30 30"><circle cx="15" cy="15" r="15" fill="url(#kraken)"/><path fill="none" stroke="#fff" stroke-width="1.800" d="M13 24v-6M17 24v-6M10 23v-4q0-2-1-3M20 23v-4q0-2 1-3M6 16v4q0 2 2 2M24 16v4q0 2-2 2"/><rect x="9" y="6" width="12" height="11" rx="5" fill="none" stroke="#fff" stroke-width="2.200"/></svg>
  <svg width="30" height="30"><use href="#chrome"/></svg>
  <svg width="30" height="30" viewBox="0 0 30 30"><circle cx="15" cy="15" r="15" fill="#ff6c37"/><circle cx="21" cy="8" r="3" fill="#fff"/><path fill="#fff" d="m18 10 3 2-5 7-7 5-1-1 5-6z"/></svg>
  <svg width="30" height="30" viewBox="0 0 30 30"><circle cx="15" cy="15" r="15" fill="#5865f2"/><path fill="#fff" d="M9 8.500 13 8l.6 1h2.800l.6-1 4 .5q3 5 3 11-2 2-5 2.500l-1-2h-6l-1 2q-3-.5-5-2.500 0-6 3-11z"/><circle cx="12" cy="15.500" r="1.900" fill="#5865f2"/><circle cx="18" cy="15.500" r="1.900" fill="#5865f2"/></svg>
  <svg width="30" height="30" viewBox="0 0 30 30"><path fill="url(#fox)" d="M3 5l3 4q4-3 8-1 1-3 4-8 2 5 6 6l1 3q4 4 3 10-2 9-12 10Q4 29 1 19q-1-7 2-14z"/><circle cx="15" cy="16" r="6.500" fill="#7a3fe0"/><path fill="#ff9a20" d="M6 11q6-3 10 2-5 0-5 3t5 4q-6 1-9-3z"/></svg>
  <svg width="30" height="30" viewBox="0 0 30 30"><path fill="#2b9bea" d="M21 0 30 4v22l-9 4z"/><path fill="#1f8ad2" d="M21 0v8L3 22l-3-2v-2z"/><path fill="#1272b8" d="M21 30v-8L3 8 0 10v2z"/></svg>
  <svg width="30" height="30" viewBox="0 0 30 30"><circle cx="15" cy="15" r="14.500" fill="#f6f6f4"/><path fill="#0f9a5c" d="M15 5q-5 6-4 11 1 4 4 7z"/><path fill="#0a5a3c" d="M15 5q5 6 4 11-1 4-4 7z"/></svg>
  <div class="app running"><svg width="36" height="36" viewBox="0 0 36 36"><svg y="6" width="30" height="30"><use href="#chrome"/></svg><circle cx="26" cy="9.500" r="9.500" fill="#fbe36a"/><path fill="#d2641e" d="m20 6 4 2 5-4 3 1-2 8-4 4-6-2z"/><path fill="#fff" d="m24 10 4-1-1 4-3 1z"/></svg></div>
  <div class="app focused"><svg width="29" height="30" viewBox="0 0 29 30"><path fill="#ef5f7d" d="M0 2 3 0v21l-3 2z"/><path fill="#e51050" d="M3 0h25v21H3z"/><path fill="#7e0a2c" d="M0 21h28l1 9H0z"/><text x="15" y="17" text-anchor="middle" class="logo-a small">A</text><text x="15" y="28" text-anchor="middle" class="cad">CAD</text></svg></div>
  <div class="tray">
    <svg width="15" height="9"><path fill="none" stroke="#fff" stroke-width="1.800" d="m1 8 6.500-6.500L14 8"/></svg>
    <svg width="22" height="16" viewBox="0 0 22 16"><path fill="none" stroke="#fff" stroke-width="1.700" d="M1 6q10-9.500 20 0M4 9.200q7-6.500 14 0M7 12.200q4-3.800 8 0"/><circle cx="11" cy="14" r="1.800" fill="#fff"/></svg>
    <svg width="21" height="17" viewBox="0 0 21 17"><path fill="none" stroke="#fff" stroke-width="1.400" d="M1 5.500h3.500l5-4v14l-5-4H1zM12 5.500q2 3 0 6M14.500 3.500q4 5 0 10M17 1.500q6 7 0 14"/></svg>
    <svg width="22" height="17" viewBox="0 0 22 17"><rect x="1" y="3" width="17.500" height="12.500" rx="3" fill="none" stroke="#fff" stroke-width="1.600"/><path stroke="#fff" stroke-width="2" d="M20.500 7v5"/><path fill="#fff" d="M3 9 8 7v7H3z"/><path fill="#fff" stroke="#202020" d="M5 0 1 7h3l-1 5 6-7H6l1-5z"/></svg>
    <div class="clock">10:42 PM<br>5/17/2024</div>
    <svg width="17" height="20" viewBox="0 0 17 20"><path fill="#86e2ff" d="M8.500 0q6.500 0 6.500 7v4l2 4.500H0L2 11V7q0-7 6.500-7zM5.500 17h6q-.5 3-3 3t-3-3z"/></svg>
  </div>
</div>
<script src="grid.js"></script>
</body>
</html>
```
FILE: grid.js
```js
// Builds the drafting grid: a square lattice turned slightly about the drawing origin.
const step = 42.2, angle = 0.011, ox = 966, oy = 378;
const cos = Math.cos(angle), sin = Math.sin(angle);
const toScreen = (u, v) => (ox + u * cos + v * sin).toFixed(1) + ' ' + (oy - u * sin + v * cos).toFixed(1);
let major = '', minor = '';
for (let i = -125; i <= 125; i++) {
  const t = i * step / 5;
  const d = 'M' + toScreen(t, -200) + 'L' + toScreen(t, 640) + 'M' + toScreen(-1000, t) + 'L' + toScreen(1000, t);
  if (i % 5) minor += d; else major += d;
}
document.getElementById('minor').setAttribute('d', minor);
document.getElementById('major').setAttribute('d', major);
```
FILE: styles.css
```css
* { box-sizing: border-box; }
body { margin: 0; width: 1920px; height: 1080px; overflow: hidden; background: #202020; font: 14px/20px "Open Sans", "Noto Sans", sans-serif; letter-spacing: -0.2px; color: #f0f0f0; }
svg { display: block; flex: none; }
.defs { position: absolute; }
span, b, em { white-space: nowrap; }
em { font-style: normal; }

.desktop { height: 1020px; padding: 0 2px; background: linear-gradient(90deg, #3f4144 50%, transparent 50%), linear-gradient(#0c0d0f 220px, #c9ccd0 220px); }
.window { height: 1020px; display: flex; flex-direction: column; background: #222933; border: 1px solid #0b8ac9; border-radius: 9px; overflow: hidden; }

.caret { flex: none; width: 0; height: 0; border: 5px solid transparent; border-top: 6px solid #dcdcdc; border-bottom: 0; }
.caret.small { border-width: 5px 3.500px 0; }
.caret.dim { border-top-color: #7b8088; }
.caret.dark { border-top-color: #555; }
.caret.up { border-top: 0; border-bottom: 5px solid #555; }

.titlebar { height: 44px; padding: 0 0 6px 17px; display: grid; align-items: center; grid-template-columns: 34px 23px 29px 30px 29px 31px 31px 29px 30px 27px 19px 27px 15px 227px 21px 27px 64px 180px 191px 15px 229px 28px 28px 104px 23px 27px 26px 21px 11px 28px 17px 124px 58px 58px 20px; }
.titlebar .caret.small { margin-left: 2px; }
.titlebar > span { padding-top: 1px; }
.workspace { width: 223px; height: 26px; padding: 0 1px 0 4px; display: flex; align-items: center; gap: 2px; background: #3b4453; letter-spacing: .1px; }
.workspace .caret { margin-left: auto; }
.share { color: #85c9ff; letter-spacing: 0; }
.product { font-size: 14.500px; letter-spacing: -.05px; }
.path { font-size: 14.500px; letter-spacing: -.22px; }
.account { letter-spacing: .1px; }
.find { width: 223px; height: 26px; margin-top: 1px; padding: 4px 3px 0; background: #464f61; font-size: 13.500px; }
.sep { width: 1px; height: 22px; background: #525a68; }
.logo-a { font: bold 17px "Open Sans"; fill: #fff; }
.logo-a.small { font-size: 15px; }
.cad { font: bold 7px "Open Sans"; fill: #fff; letter-spacing: 0; }
.help-q { font: bold 15px "Open Sans"; fill: #5b616b; }

.tabs { height: 25px; padding-left: 8px; display: grid; align-items: center; color: #b8bcc2; letter-spacing: .02px; grid-template-columns: 76px 82px 60px 56px 78px 70px 76px 102px 112px 132px 24px 20px; }
.tab.active { width: 63px; height: 25px; line-height: 26px; text-align: center; background: #3b4453; color: #f0f0f0; }

.ribbon { height: 124px; margin: 0 5px; display: flex; background: #3b4453; }
.panel { display: flex; flex-direction: column; justify-content: space-between; border-right: 1px solid #222933; }
.tools { display: grid; padding-top: 9px; }
.tool { position: relative; display: flex; flex-direction: column; align-items: center; padding: 0; border: 0; background: none; color: inherit; font: inherit; letter-spacing: -.15px; }
.tool > svg { width: 40px; height: 40px; margin-bottom: 5px; }
.tool .caret { margin-top: 2px; }
.tool .side { position: absolute; right: 8px; top: 62px; }
.three { font: bold 24px "Open Sans"; fill: #6fc0ff; }
.caption { position: relative; height: 24px; padding-top: 1px; display: flex; align-items: center; justify-content: center; gap: 9px; letter-spacing: -.1px; }
.create { width: 275px; }
.create .tools { grid-template-columns: 58px 52px 64px 44px 56px; }
.edit { width: 244px; }
.edit .tools { grid-template-columns: 69px 43px 68px 56px; }
.draw { width: 142px; }
.draw .tools { grid-template-columns: 58px 79px; }
.modify { width: 307px; }
.modify .tools { grid-template-columns: 67px 47px 51px 44px 95px; }
.selection { width: 220px; }
.selection .tools { grid-template-columns: 65px 75px 80px; }
.coordinates { width: 175px; }
.coordinates .tools { grid-template-columns: 51px 45px 76px; }
.coordinates .caption { padding-right: 16px; }
.launcher { position: absolute; right: 6px; top: 8px; }
.layers { width: 331px; border: 0; }
.layers .tools { grid-template-columns: 77px 250px; }
.layers .caption { letter-spacing: .15px; }
.combos { margin-top: -2px; display: flex; flex-direction: column; gap: 2px; letter-spacing: .12px; }
.combo { height: 27px; padding: 0 4px 0 2px; display: flex; align-items: center; gap: 4px; border: 1px solid #262d38; background: #4d586b; }
.combo.view { gap: 3px; }
.combo.tall { height: 28px; padding: 0 1px 0 6px; margin-bottom: 1px; gap: 2px; }
.combo .caret { margin-left: auto; }

.docs { height: 38px; padding: 0 0 5px 24px; display: grid; align-items: center; grid-template-columns: 33px 19px 40px 162px 29px 20px; background: linear-gradient(#3b4453, #3b4453) 4px 33px / 1906px 5px no-repeat; letter-spacing: 0; }
.docs > span { padding-top: 3px; }
.docs > svg { margin-top: 3px; }
.doc-tab { width: 150px; height: 30px; margin-top: 3px; padding: 0 15px 0 21px; display: flex; align-items: center; justify-content: space-between; background: #3b4453; clip-path: polygon(12px 0, 100% 0, 138px 100%, 0 100%); }

.doc-tab b { letter-spacing: -.05px; }

.viewport { position: relative; height: 742px; margin: 0 4px; background: #212830; overflow: hidden; }
.view-label { position: absolute; left: 4px; top: 5px; font-size: 14.500px; letter-spacing: -.04px; }
.compass text { font: bold 20px "Liberation Sans"; fill: #a9abae; text-anchor: middle; }
.cube { font: bold 13px "Liberation Sans"; fill: #4b525e; text-anchor: middle; letter-spacing: 0; }
.wcs { font: 13px "Liberation Sans"; fill: #6c707e; letter-spacing: 0; }
.history { position: absolute; left: 461px; top: 687px; width: 77px; height: 18px; padding-left: 2px; border-radius: 2px; background: #5a5e60; font: 14.600px/18px "DejaVu Sans Mono", monospace; letter-spacing: 0; }
.command { position: absolute; left: 382px; top: 710px; width: 1141px; height: 32px; display: flex; }
.handle { width: 72px; display: flex; align-items: center; gap: 9px; padding-left: 4px; background: #2a2e3a; }
.handle svg:last-child { margin-left: 6px; }
.entry { flex: 1; display: flex; align-items: center; padding: 0 5px; border-radius: 3px; background: rgba(198, 199, 201, .94); color: #555; font: italic 14.800px/20px "DejaVu Sans Mono", monospace; letter-spacing: 0; }
.entry .caret { margin: 0 8px 0 2px; }
.entry .up { margin: 0 0 0 auto; }

.bottom { flex: 1; padding-left: 24px; display: flex; justify-content: space-between; background: linear-gradient(#3b4453, #3b4453) 4px 0 / 1906px 5px no-repeat; }
.layouts { height: 30px; margin-top: 5px; display: grid; align-items: center; grid-template-columns: 31px 95px 63px 19px 63px 22px 30px 20px; letter-spacing: -.05px; }
.layouts > span { padding-top: 1px; }
.layout-tab { width: 86px; height: 30px; padding-left: 21px; line-height: 31px; background: #3b4453; clip-path: polygon(12px 0, 100% 0, 75px 100%, 0 100%); }
.status { height: 31px; margin: 7px 6px 0 0; display: flex; }
.cell { display: flex; align-items: center; background: #3b4453; height: 31px; }
.on { width: 29px; height: 28px; display: grid; place-items: center; background: #5f8cc0; }
.c-model { width: 59px; margin-right: 3px; justify-content: center; letter-spacing: 0; }
.c-grid { width: 80px; margin-right: 3px; }
.c-grid > svg { margin: 0 12px 0 7px; }
.c-dyn { width: 29px; margin-right: 2px; justify-content: center; }
.c-ortho { width: 130px; margin-right: 1px; padding-left: 5px; }
.c-ortho svg + svg { margin-left: 9px; }
.c-ortho .caret { margin: 0 10px 0 9px; }
.c-ortho .caret:last-child { margin: 0 0 0 13px; }
.c-track { width: 79px; margin-right: 4px; padding-left: 5px; }
.c-track .on { margin: 0 5px 0 6px; }
.c-anno { width: 132px; margin-right: 3px; }
.c-anno > svg { margin-left: 6px; }
.c-anno > svg + svg { margin-left: 9px; }
.c-anno em { margin: 0 5px 0 10px; letter-spacing: -.8px; }
.c-gear { width: 50px; margin-right: 1px; padding-left: 5px; gap: 10px; }
.c-plus { width: 30px; margin-right: 3px; justify-content: center; }
.c-iso { width: 30px; margin-right: 3px; justify-content: center; }
.c-bar { width: 4px; margin-right: 3px; }
.c-full { width: 30px; margin-right: 2px; justify-content: center; }
.c-menu { width: 30px; justify-content: center; }

.taskbar { height: 60px; padding: 0 27px 0 530px; display: flex; align-items: center; border-top: 1px solid #3c3c3c; background: #202020; }
.taskbar > svg + svg { margin-left: 25px; }
.search { width: 275px; height: 40px; margin: 0 15px 0 17px; padding: 0 9px 0 14px; display: flex; align-items: center; border: 1px solid #555; border-radius: 20px; background: #3d3d3d; font-size: 16px; color: #dcdcdc; }
.search span { margin: 0 auto 0 13px; }
.app { position: relative; height: 50px; display: grid; place-items: center; }
.app::after { content: ""; position: absolute; bottom: 0; left: 11px; width: 8px; height: 4px; border-radius: 2px; background: #9a9a9a; }
.running { margin-left: 25px; }
.running svg { margin-top: -6px; }
.focused { width: 50px; margin-left: 9px; border-radius: 5px; background: #2e2e2e; }
.focused::after { left: 15px; width: 20px; background: #4cc2ff; }
.tray { margin-left: auto; display: flex; align-items: center; }
.tray svg:nth-child(2) { margin-left: 22px; }
.tray svg:nth-child(3) { margin-left: 9px; }
.tray svg:nth-child(4) { margin-left: 8px; }
.clock { width: 88px; text-align: right; margin-right: 10px; font-size: 14.700px; letter-spacing: -.15px; }
```
